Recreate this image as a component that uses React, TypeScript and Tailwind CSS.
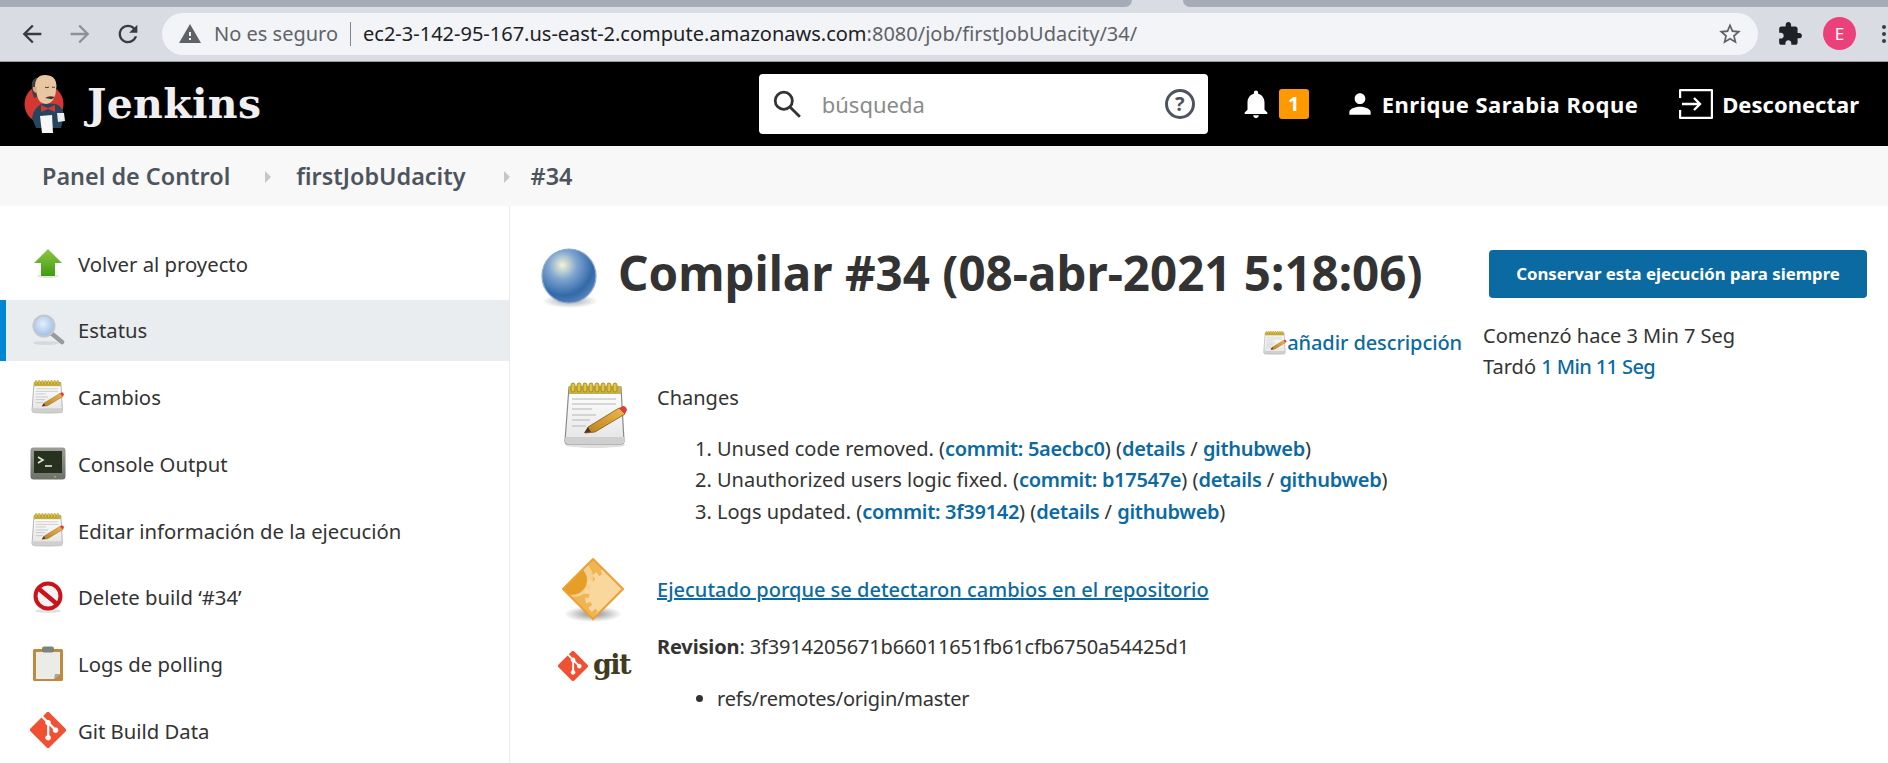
const sans = "font-['Noto_Sans','Open_Sans',sans-serif]";

function Material({ d, className }: { d: string; className: string }) {
  return (
    <svg viewBox="0 0 24 24" className={className} fill="currentColor">
      <path d={d} />
    </svg>
  );
}

function Notepad({ className }: { className: string }) {
  return (
    <svg viewBox="0 0 66 66" className={className}>
      <defs>
        <linearGradient id="padBody" x1="0" y1="0" x2="0" y2="1">
          <stop offset="0" stopColor="#ffffff" />
          <stop offset="1" stopColor="#e4e4e4" />
        </linearGradient>
        <linearGradient id="pencil" x1="0" y1="1" x2="1" y2="0">
          <stop offset="0" stopColor="#b8801f" />
          <stop offset="1" stopColor="#f0b94a" />
        </linearGradient>
      </defs>
      <ellipse cx="32" cy="63" rx="30" ry="3" fill="#000" opacity="0.12" />
      <path d="M6 5h52l3 54q0 3-3 3H5q-3 0-3-3z" fill="url(#padBody)" stroke="#8a8a8a" strokeWidth="1.2" />
      <path d="M2.500 55h58.500l.5 4q0 3-3 3H5q-3 0-3-3z" fill="#cfcfcf" />
      <rect x="6" y="4" width="52" height="8" fill="#c9ae4e" />
      <g fill="#e0c437" stroke="#9a8220" strokeWidth="0.8">
        <rect x="8" y="1" width="4" height="9" rx="2" />
        <rect x="14" y="1" width="4" height="9" rx="2" />
        <rect x="20" y="1" width="4" height="9" rx="2" />
        <rect x="26" y="1" width="4" height="9" rx="2" />
        <rect x="32" y="1" width="4" height="9" rx="2" />
        <rect x="38" y="1" width="4" height="9" rx="2" />
        <rect x="44" y="1" width="4" height="9" rx="2" />
        <rect x="50" y="1" width="4" height="9" rx="2" />
      </g>
      <g stroke="#b5b5b5" strokeWidth="1.2">
        <path d="M9 17h44M9 22h44M9 27h20M9 33h24M9 38h18M9 44h14" />
      </g>
      <path d="M25 45l31-19 6 6-30 18-10 1z" fill="url(#pencil)" stroke="#7c5a1c" strokeWidth="0.8" />
      <path d="M56 26l4-2q3 0 4 4l-2 4z" fill="#e33b3b" />
      <path d="M25 45l-4 6 7-1z" fill="#4a3a22" />
    </svg>
  );
}

function UpArrow() {
  return (
    <svg viewBox="0 0 32 32" className="w-8 h-8">
      <defs>
        <linearGradient id="upG" x1="0" y1="0" x2="0" y2="1">
          <stop offset="0" stopColor="#8fc740" />
          <stop offset="1" stopColor="#3f9c12" />
        </linearGradient>
      </defs>
      <ellipse cx="16" cy="28" rx="11" ry="2" fill="#000" opacity="0.1" />
      <path d="M16 1L30 15H23V28H9V15H2z" fill="url(#upG)" />
    </svg>
  );
}

function Magnifier() {
  return (
    <svg viewBox="0 0 34 34" className="w-[34px] h-[34px]">
      <defs>
        <radialGradient id="lens" cx="0.45" cy="0.4" r="0.6">
          <stop offset="0" stopColor="#e4eefb" />
          <stop offset="1" stopColor="#9dbfe8" />
        </radialGradient>
      </defs>
      <ellipse cx="15" cy="30" rx="13" ry="2" fill="#000" opacity="0.08" />
      <path d="M20 20l11 9" stroke="#9a9a9a" strokeWidth="4.5" strokeLinecap="round" />
      <circle cx="13" cy="13" r="10.5" fill="url(#lens)" stroke="#c4c8cc" strokeWidth="2" />
    </svg>
  );
}

function Terminal() {
  return (
    <svg viewBox="0 0 36 34" className="w-9 h-[34px]">
      <defs>
        <linearGradient id="termG" x1="0" y1="0" x2="0" y2="1">
          <stop offset="0" stopColor="#9b9d96" />
          <stop offset="1" stopColor="#6d6f69" />
        </linearGradient>
      </defs>
      <rect x="0.5" y="0.5" width="35" height="32" rx="3" fill="url(#termG)" />
      <rect x="4" y="4" width="28" height="22" fill="#26321f" />
      <path d="M8 10l5 3-5 3" stroke="#dfe8d4" strokeWidth="1.6" fill="none" />
      <path d="M15 19h7" stroke="#dfe8d4" strokeWidth="1.6" />
      <rect x="24" y="29" width="2" height="1.5" fill="#7fc24a" />
    </svg>
  );
}

function NoEntry() {
  return (
    <svg viewBox="0 0 32 32" className="w-8 h-8">
      <ellipse cx="16" cy="30" rx="13" ry="1.8" fill="#000" opacity="0.12" />
      <circle cx="16" cy="15" r="12.5" fill="#f4f2f2" stroke="#c8141c" strokeWidth="4" />
      <path d="M7 8l18 15" stroke="#c8141c" strokeWidth="4.5" />
    </svg>
  );
}

function Clipboard() {
  return (
    <svg viewBox="0 0 32 36" className="w-8 h-9">
      <rect x="1" y="3" width="30" height="32" rx="1.5" fill="#c08a3c" />
      <path d="M4 6h24v22l-6 5H4z" fill="#ebebe8" />
      <path d="M22 33l6-5h-5z" fill="#a5a5a5" />
      <rect x="10" y="0.5" width="12" height="6" rx="2" fill="#7f8378" />
    </svg>
  );
}

function GitDiamond({ className }: { className: string }) {
  return (
    <svg viewBox="0 0 92 92" className={className}>
      <path
        fill="#f05133"
        d="M90.200 41.900L50.100 1.800a5.900 5.900 0 0 0-8.400 0l-8.300 8.300 10.600 10.600a7 7 0 0 1 8.900 8.900l10.200 10.200a7 7 0 1 1-4.200 4L49.400 34.300v25a7 7 0 1 1-5.800-.2V33.800a7 7 0 0 1-3.800-9.200L29.400 14.100 1.800 41.700a5.900 5.900 0 0 0 0 8.400l40.100 40.100a5.900 5.900 0 0 0 8.400 0l39.900-39.900a5.900 5.900 0 0 0 0-8.400z"
      />
    </svg>
  );
}

function BuildDiamond() {
  return (
    <svg viewBox="0 0 62 64" className="w-[62px] h-16">
      <defs>
        <radialGradient id="diaShadow">
          <stop offset="0" stopColor="#000" stopOpacity="0.45" />
          <stop offset="1" stopColor="#000" stopOpacity="0" />
        </radialGradient>
        <clipPath id="diaClip">
          <path d="M31 1L61 31 31 61 1 31z" />
        </clipPath>
      </defs>
      <ellipse cx="31" cy="56" rx="29" ry="8" fill="url(#diaShadow)" />
      <path d="M31 1L61 31 31 61 1 31z" fill="#efb552" />
      <g clipPath="url(#diaClip)">
        <circle cx="12" cy="20" r="19" fill="#f5cf8d" />
        <circle cx="10" cy="22" r="15" fill="#e59f26" />
        <circle cx="48" cy="36" r="21" fill="#fad79d" />
        <circle cx="48" cy="36" r="23" fill="none" stroke="#fad79d" strokeWidth="5" strokeDasharray="5 4" />
      </g>
      <path d="M31 1L61 31 31 61 1 31z" fill="none" stroke="#ef9f35" strokeWidth="2" />
    </svg>
  );
}

function Ball() {
  return (
    <svg viewBox="0 0 60 60" className="w-[60px] h-[60px] mt-[4px] -mb-[4px]">
      <defs>
        <radialGradient id="ballG" cx="0.38" cy="0.3" r="0.75">
          <stop offset="0" stopColor="#f4f4d6" />
          <stop offset="0.35" stopColor="#7fa5d0" />
          <stop offset="0.75" stopColor="#3269a8" />
          <stop offset="1" stopColor="#5b86bd" />
        </radialGradient>
        <radialGradient id="ballShadow">
          <stop offset="0" stopColor="#000" stopOpacity="0.35" />
          <stop offset="1" stopColor="#000" stopOpacity="0" />
        </radialGradient>
      </defs>
      <ellipse cx="29" cy="53" rx="28" ry="7" fill="url(#ballShadow)" />
      <circle cx="28" cy="28" r="27" fill="url(#ballG)" stroke="#8fabd0" strokeWidth="1.2" />
    </svg>
  );
}

function JenkinsLogo() {
  return (
    <svg viewBox="0 0 42 60" className="w-[42px] h-[60px]">
      <circle cx="20" cy="30" r="19.500" fill="#d33833" />
      <path d="M8 44q2-12 12-15l12 1q7 3 8 11l-3 13H12z" fill="#27455e" />
      <path d="M8 8q3-5 6-4l-2 9 1 10-3 1q-3-8-2-16z" fill="#3f3f3f" />
      <path d="M11 13q0-12 10-12 11 0 11.500 11l-1 8q-2 9-9 10-7 0-9-7z" fill="#e9c6a2" />
      <path d="M9 13q-1 4 3 6l1-6z" fill="#d8a985" />
      <path d="M21 13q2 1.500 4 0M28 13q1.500 1 3 0" stroke="#49382a" strokeWidth="1" fill="none" />
      <path d="M21 24q4-3 10-1-3 3-5 2z" fill="#49382a" />
      <path d="M17 31l7 3 7-3v7l-7-3-7 3z" fill="#d33833" />
      <path d="M16 42l12-1 1 18H18z" fill="#f7f7f7" />
      <path d="M33 39h7l1 8-7 1z" fill="#eeeeee" />
    </svg>
  );
}

function GitLogo() {
  return (
    <div className="flex items-center gap-[5px] h-[30px] ml-[2px]">
      <GitDiamond className="w-[30px] h-[30px]" />
      <span className="font-['DejaVu_Serif',serif] font-bold text-[27px] leading-[30px] tracking-[-1.5px] text-[#413b20] -mt-[3px]">git</span>
    </div>
  );
}

const sideItems = [
  { label: "Volver al proyecto", icon: <UpArrow /> },
  { label: "Estatus", icon: <Magnifier />, active: true },
  { label: "Cambios", icon: <Notepad className="w-[34px] h-[34px]" /> },
  { label: "Console Output", icon: <Terminal /> },
  { label: "Editar información de la ejecución", icon: <Notepad className="w-[34px] h-[34px]" /> },
  { label: "Delete build ‘#34’", icon: <NoEntry /> },
  { label: "Logs de polling", icon: <Clipboard /> },
  { label: "Git Build Data", icon: <GitDiamond className="w-9 h-9" /> },
];

const commits = [
  { msg: "Unused code removed.", hash: "5aecbc0" },
  { msg: "Unauthorized users logic fixed.", hash: "b17547e" },
  { msg: "Logs updated.", hash: "3f39142" },
];

export default function App() {
  return (
    <div className={`${sans} w-[1888px] h-[763px] overflow-hidden bg-white text-[#333]`}>
      {/* CHROME */}
      <div className="h-[7px] bg-[#dadce3] flex">
        <div className="w-[1132px] bg-[#a6abb8] rounded-br-lg" />
        <div className="ml-[51px] flex-1 bg-[#a6abb8] rounded-bl-lg" />
      </div>
      <div className="h-[55px] bg-[#dadce3] border-b border-[#9a9aa0] flex items-center pl-[18px] pb-[1px]">
        <Material className="w-7 h-7 text-[#3a3b3f]" d="M20 11H7.830l5.590-5.590L12 4l-8 8 8 8 1.410-1.410L7.830 13H20v-2z" />
        <Material className="w-7 h-7 ml-5 text-[#8e9096]" d="M12 4l-1.410 1.410L16.170 11H4v2h12.170l-5.580 5.590L12 20l8-8z" />
        <Material className="w-7 h-7 ml-5 text-[#3a3b3f]" d="M17.650 6.350C16.200 4.900 14.210 4 12 4c-4.420 0-7.990 3.580-7.990 8s3.570 8 7.990 8c3.730 0 6.840-2.550 7.730-6h-2.080c-.820 2.330-3.040 4-5.650 4-3.310 0-6-2.690-6-6s2.690-6 6-6c1.660 0 3.140.690 4.220 1.780L13 11h7V4l-2.350 2.350z" />
        <div className="ml-5 w-[1596px] h-[42px] rounded-full bg-[#f3f4f7] flex items-center pl-[16px] pr-[15px] text-[20px]">
          <Material className="w-[24px] h-[24px] text-[#5f6368]" d="M1 21h22L12 2 1 21zm12-3h-2v-2h2v2zm0-4h-2v-4h2v4z" />
          <span className="ml-[12px] text-[#5f6368]">No es seguro</span>
          <span className="ml-[12px] w-px h-[24px] bg-[#80868b]" />
          <span className="ml-[12px] text-[#202124]">
            ec2-3-142-95-167.us-east-2.compute.amazonaws.com<span className="text-[#5f6368]">:8080/job/firstJobUdacity/34/</span>
          </span>
          <Material className="w-[26px] h-[26px] ml-auto text-[#5f6368]" d="M22 9.240l-7.190-.620L12 2 9.190 8.630 2 9.240l5.460 4.730L5.820 21 12 17.270 18.180 21l-1.630-7.030L22 9.240zM12 15.400l-3.760 2.270 1-4.280-3.320-2.880 4.380-.380L12 6.100l1.710 4.040 4.380.380-3.320 2.880 1 4.280L12 15.400z" />
        </div>
        <Material className="w-[26px] h-[26px] ml-[19px] text-[#202124]" d="M20.500 11H19V7c0-1.100-.900-2-2-2h-4V3.500C13 2.120 11.880 1 10.500 1S8 2.120 8 3.500V5H4c-1.100 0-1.990.900-1.990 2v3.800H3.500c1.490 0 2.700 1.210 2.700 2.700s-1.210 2.700-2.700 2.700H2V20c0 1.100.900 2 2 2h3.800v-1.500c0-1.490 1.210-2.700 2.700-2.700 1.490 0 2.700 1.210 2.700 2.700V22H17c1.100 0 2-.900 2-2v-4h1.500c1.380 0 2.500-1.120 2.500-2.500S21.880 11 20.500 11z" />
        <div className="ml-5 w-[33px] h-[33px] shrink-0 rounded-full bg-[#ec407a] text-white text-[17px] flex items-center justify-center">E</div>
        <div className="ml-[26px] flex flex-col gap-[3px]">
          <span className="w-1 h-1 rounded-full bg-[#3a3b3f]" />
          <span className="w-1 h-1 rounded-full bg-[#3a3b3f]" />
          <span className="w-1 h-1 rounded-full bg-[#3a3b3f]" />
        </div>
      </div>

      {/* HEADER */}
      <header className="h-[84px] bg-black flex items-center text-white pl-[24px]">
        <JenkinsLogo />
        <span className="ml-[21px] font-['DejaVu_Serif',serif] font-bold text-[41px] tracking-[0.3px] text-[#f0f0f0] leading-none">Jenkins</span>
        <div className="ml-auto w-[449px] h-[60px] bg-white rounded-[4px] flex items-center pl-[13px] pr-[13px] text-[22px] text-[#8a8a8a]">
          <svg viewBox="0 0 28 28" className="w-[30px] h-[30px] text-[#333]" fill="none" stroke="currentColor" strokeWidth="2.600">
            <circle cx="11" cy="11" r="8" />
            <path d="M17 17l9 9" />
          </svg>
          <span className="ml-[20px]">búsqueda</span>
          <div className="ml-auto w-[30px] h-[30px] rounded-full border-[3px] border-[#4d545d] text-[#4d545d] flex items-center justify-center text-[20px] font-bold">?</div>
        </div>
        <Material className="w-[34px] h-[34px] ml-[31px]" d="M12 22c1.100 0 2-.900 2-2h-4c0 1.100.890 2 2 2zm6-6v-5c0-3.070-1.640-5.640-4.500-6.320V4c0-.830-.670-1.500-1.500-1.500s-1.500.670-1.500 1.500v.680C7.630 5.360 6 7.920 6 11v5l-2 2v1h16v-1l-2-2z" />
        <div className="ml-[6px] w-[30px] h-[30px] rounded-[3px] bg-[#fe9a00] text-white font-bold text-[20px] flex items-center justify-center">1</div>
        <Material className="w-[32px] h-[32px] ml-[35px]" d="M12 12c2.210 0 4-1.790 4-4s-1.790-4-4-4-4 1.790-4 4 1.790 4 4 4zm0 2c-2.670 0-8 1.340-8 4v2h16v-2c0-2.660-5.330-4-8-4z" />
        <span className="ml-[6px] font-bold text-[22px] tracking-[0.46px]">Enrique Sarabia Roque</span>
        <svg viewBox="0 0 34 30" className="w-[34px] h-[30px] ml-[41px]" fill="none" stroke="currentColor" strokeWidth="2.400">
          <path d="M1 9V2q0-1 1-1h30q1 0 1 1v26q0 1-1 1H2q-1 0-1-1v-7" />
          <path d="M3 15h18M15 9l6 6-6 6" />
        </svg>
        <span className="ml-[9px] mr-[29px] font-bold text-[22px]">Desconectar</span>
      </header>

      {/* BREADCRUMB */}
      <nav className="h-[60px] bg-[#f8f8f8] flex items-center pl-[42px] pt-[1px] text-[23.4px] font-semibold text-[#4d545d]">
        <span>Panel de Control</span>
        <span className="ml-[35px] w-0 h-0 border-y-[6px] border-y-transparent border-l-[6px] border-l-[#c4c6c9]" />
        <span className="ml-[25px]">firstJobUdacity</span>
        <span className="ml-[38px] w-0 h-0 border-y-[6px] border-y-transparent border-l-[6px] border-l-[#c4c6c9]" />
        <span className="ml-[21px]">#34</span>
      </nav>

      <div className="flex">
        {/* SIDEBAR */}
        <aside className="w-[510px] h-[557px] border-r border-[#eaeaea] pt-[27px] text-[20.3px] shrink-0">
          {sideItems.map((item) => (
            <div
              key={item.label}
              className={
                item.active
                  ? "flex items-center h-[61px] mb-[5.7px] pl-[24px] bg-[#e9edf0] border-l-[6px] border-[#0087d4]"
                  : "flex items-center h-[61px] mb-[5.7px] pl-[30px]"
              }
            >
              <span className="w-9 h-9 flex items-center justify-center">{item.icon}</span>
              <span className="ml-[12px] pt-[1px]">{item.label}</span>
            </div>
          ))}
        </aside>

        {/* CONTENT */}
        <main className="flex-1 pl-[31px] pr-[21px] text-[20px]">
          <div className="flex items-center pt-[38px]">
            <Ball />
            <h1 className="ml-[17px] -mt-[2px] font-bold text-[47.5px] leading-[60px] whitespace-nowrap">Compilar #34 (08-abr-2021 5:18:06)</h1>
            <button className="ml-auto w-[378px] h-[48px] rounded-[4px] bg-[#0b6aa2] text-white font-bold text-[16.8px]">
              Conservar esta ejecución para siempre
            </button>
          </div>

          <div className="flex">
            <div className="flex-1 min-w-0 pl-[22px]">
              <div className="h-[14px]" />
              <div className="flex justify-end items-center pt-[4px] h-[45px]">
                <Notepad className="w-6 h-6" />
                <a className="font-medium tracking-[-0.1px] text-[#0b6aa2]">añadir descripción</a>
              </div>

              <div className="flex mt-[19px]">
                <Notepad className="w-[66px] h-[66px] shrink-0" />
                <div className="ml-[28px] mt-[1px]">
                  <p className="leading-[30px]">Changes</p>
                  <ol className="mt-[20px] pl-[60px] list-decimal leading-[31.4px]">
                    {commits.map((c) => (
                      <li key={c.hash}>
                        {c.msg} (<a className="font-semibold tracking-[-0.3px] text-[#0b6aa2]">commit: {c.hash}</a>) (<a className="font-semibold tracking-[-0.3px] text-[#0b6aa2]">details</a> / <a className="font-semibold tracking-[-0.3px] text-[#0b6aa2]">githubweb</a>)
                      </li>
                    ))}
                  </ol>
                </div>
              </div>

              <div className="flex mt-[31px]">
                <div className="w-[72px] shrink-0 flex flex-col items-center -ml-[6px]">
                  <BuildDiamond />
                  <div className="mt-[29px]">
                    <GitLogo />
                  </div>
                </div>
                <div className="ml-[28px] pt-[17px]">
                  <a className="text-[#0b6aa2] underline font-medium">Ejecutado porque se detectaron cambios en el repositorio</a>
                  <p className="mt-[27px] tracking-[-0.15px]"><b>Revision</b>: 3f3914205671b66011651fb61cfb6750a54425d1</p>
                  <ul className="mt-[22px] pl-[60px] list-disc">
                    <li className="tracking-[-0.2px]">refs/remotes/origin/master</li>
                  </ul>
                </div>
              </div>
            </div>
            <div className="w-[384px] shrink-0 ml-[21px] leading-[31px] pt-[16px]">
              <p>Comenzó hace 3 Min 7 Seg</p>
              <p>Tardó <a className="font-medium tracking-[-0.6px] text-[#0b6aa2]">1 Min 11 Seg</a></p>
            </div>
          </div>
        </main>
      </div>
    </div>
  );
}
